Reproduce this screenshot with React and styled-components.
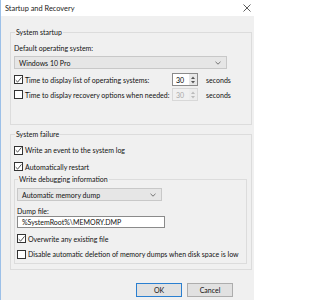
import React from 'react';
import styled, { createGlobalStyle } from 'styled-components';

const GlobalStyle = createGlobalStyle`
  html, body {
    margin: 0;
    padding: 0;
    background: #fff;
  }
  body {
    font-family: Lato, "Noto Sans", sans-serif;
    font-size: 7px;
    color: #111;
  }
`;

const Window = styled.div`
  width: 254px;
  height: 300px;
  box-sizing: border-box;
  border-left: 1px solid #9cc0e8;
  background: #f0f0f0;
  display: flex;
  flex-direction: column;
  overflow: hidden;
`;

const TitleBar = styled.div`
  height: 16px;
  flex-shrink: 0;
  background: #fff;
  display: flex;
  align-items: center;
  justify-content: space-between;
  padding: 0 3px 0 4px;
  font-size: 7.4px;
  color: #222;
`;

const Body = styled.div`
  flex: 1;
  padding: 12px 2px 0 9px;
  display: flex;
  flex-direction: column;
`;

const Group = styled.fieldset`
  margin: 0 0 ${(p) => p.$gap || 0}px 0;
  padding: ${(p) => p.$pad || '3px 4px 0 3px'};
  border: 1px solid #dcdcdc;
  height: ${(p) => p.$h}px;
  box-sizing: border-box;
  min-width: 0;
`;

const Legend = styled.legend`
  padding: 0 1px;
  margin-left: 1px;
  line-height: 9px;
`;

const Label = styled.div`
  height: 10px;
  line-height: 10px;
  margin: ${(p) => p.$m || '0'};
`;

const Combo = styled.div`
  height: 13px;
  width: ${(p) => p.$w}px;
  box-sizing: border-box;
  border: 1px solid #c8c8c8;
  background: #e6e6e6;
  display: flex;
  align-items: center;
  justify-content: space-between;
  padding: 0 5px 0 4px;
  margin: ${(p) => p.$m || '0'};
`;

const Row = styled.div`
  display: flex;
  align-items: center;
  height: ${(p) => p.$h || 15}px;
`;

const Box = styled.span`
  width: 9px;
  height: 9px;
  box-sizing: border-box;
  border: 1px solid #333;
  background: #fff;
  flex-shrink: 0;
  margin-right: 2px;
  display: flex;
  align-items: center;
  justify-content: center;
`;

const RowText = styled.span`
  width: ${(p) => (p.$w ? `${p.$w}px` : 'auto')};
  flex: none;
  white-space: nowrap;
`;

const Spin = styled.div`
  width: 26px;
  height: 13px;
  box-sizing: border-box;
  border: 1px solid ${(p) => (p.$off ? '#d8d8d8' : '#8a8a8a')};
  background: ${(p) => (p.$off ? '#f0f0f0' : '#fff')};
  color: ${(p) => (p.$off ? '#a8a8a8' : '#000')};
  display: flex;
  align-items: center;
  justify-content: space-between;
  padding-left: 3px;
  margin-right: 8px;
`;

const SpinArrows = styled.div`
  width: 8px;
  height: 11px;
  background: ${(p) => (p.$off ? '#ececec' : '#e8e8e8')};
  display: flex;
  flex-direction: column;
  align-items: center;
  justify-content: center;
  gap: 2px;
`;

const TextBox = styled.div`
  height: 12px;
  width: 148px;
  box-sizing: border-box;
  border: 1px solid #8a8a8a;
  background: #fff;
  display: flex;
  align-items: center;
  padding-left: 4px;
  margin-bottom: 3px;
`;

const Buttons = styled.div`
  display: flex;
  justify-content: flex-end;
  gap: 5px;
  padding: 13px 19px 0 0;
`;

const Button = styled.div`
  width: 46px;
  height: 14px;
  box-sizing: border-box;
  border: ${(p) => (p.$primary ? '1.5px solid #2a7fd0' : '1px solid #adadad')};
  background: #e1e1e1;
  display: flex;
  align-items: center;
  justify-content: center;
`;

const Check = () => (
  <svg width="8" height="8" viewBox="0 0 8 8">
    <path d="M0.8 4.2 L3 6.4 L7.4 1" fill="none" stroke="#222" strokeWidth="0.9" />
  </svg>
);

const Chevron = () => (
  <svg width="6" height="4" viewBox="0 0 6 4">
    <path d="M0.5 0.8 L3 3.2 L5.5 0.8" fill="none" stroke="#555" strokeWidth="0.8" />
  </svg>
);

const Tri = ({ up, off }) => (
  <svg width="4" height="3" viewBox="0 0 4 3">
    <path d={up ? 'M0 3 L2 0.5 L4 3 Z' : 'M0 0 L2 2.5 L4 0 Z'} fill={off ? '#bbb' : '#555'} />
  </svg>
);

const CloseX = () => (
  <svg width="8" height="8" viewBox="0 0 8 8">
    <path d="M0.5 0.5 L7.5 7.5 M7.5 0.5 L0.5 7.5" stroke="#333" strokeWidth="0.8" />
  </svg>
);

const CheckRow = ({ checked, children, h }) => (
  <Row $h={h}>
    <Box>{checked && <Check />}</Box>
    <RowText>{children}</RowText>
  </Row>
);

const SpinRow = ({ checked, off, children }) => (
  <Row $h={15}>
    <Box>{checked && <Check />}</Box>
    <RowText $w={147}>{children}</RowText>
    <Spin $off={off}>
      <span>30</span>
      <SpinArrows $off={off}>
        <Tri up off={off} />
        <Tri off={off} />
      </SpinArrows>
    </Spin>
    <RowText>seconds</RowText>
  </Row>
);

export default function App() {
  return (
    <>
      <GlobalStyle />
      <Window>
        <TitleBar>
          <span>Startup and Recovery</span>
          <CloseX />
        </TitleBar>
        <Body>
          <Group $h={97} $gap={5}>
            <Legend>System startup</Legend>
            <Label $m="3px 0 3px 0">Default operating system:</Label>
            <Combo $w={213} $m="0 0 3px 0">
              <span>Windows 10 Pro</span>
              <Chevron />
            </Combo>
            <SpinRow checked>Time to display list of operating systems:</SpinRow>
            <SpinRow off>Time to display recovery options when needed:</SpinRow>
          </Group>
          <Group $h={140}>
            <Legend>System failure</Legend>
            <CheckRow checked h={16}>Write an event to the system log</CheckRow>
            <CheckRow checked h={17}>Automatically restart</CheckRow>
            <Group $h={89} $pad="2px 4px 0 2px">
              <Legend>Write debugging information</Legend>
              <Combo $w={145} $m="2px 0 5px 0">
                <span>Automatic memory dump</span>
                <Chevron />
              </Combo>
              <Label>Dump file:</Label>
              <TextBox>%SystemRoot%\MEMORY.DMP</TextBox>
              <CheckRow checked h={15}>Overwrite any existing file</CheckRow>
              <CheckRow h={16}>Disable automatic deletion of memory dumps when disk space is low</CheckRow>
            </Group>
          </Group>
          <Buttons>
            <Button $primary>OK</Button>
            <Button>Cancel</Button>
          </Buttons>
        </Body>
      </Window>
    </>
  );
}
